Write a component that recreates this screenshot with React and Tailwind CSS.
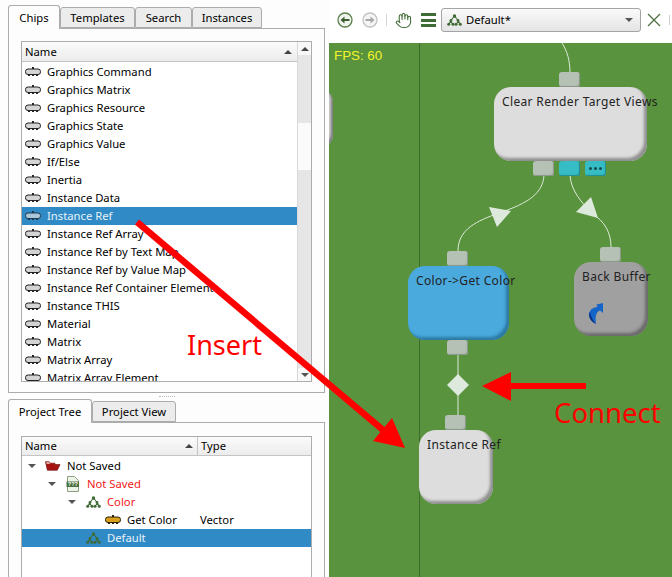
import { Hand } from "lucide-react";

const chips = [
  "Graphics Command",
  "Graphics Matrix",
  "Graphics Resource",
  "Graphics State",
  "Graphics Value",
  "If/Else",
  "Inertia",
  "Instance Data",
  "Instance Ref",
  "Instance Ref Array",
  "Instance Ref by Text Map",
  "Instance Ref by Value Map",
  "Instance Ref Container Element",
  "Instance THIS",
  "Material",
  "Matrix",
  "Matrix Array",
  "Matrix Array Element",
];

function ChipIcon({ fill = "#d4d4d4", stroke = "#222" }) {
  return (
    <svg width="16" height="10" viewBox="0 0 16 10" className="shrink-0">
      <path d="M7 0h2v2H7z" fill={stroke} />
      <rect x="0.5" y="2" width="15" height="5.5" rx="2.5" fill={fill} stroke={stroke} />
      <path d="M3 8.5h2M7 8.5h2M11 8.5h2" stroke={stroke} strokeWidth="1.2" />
    </svg>
  );
}

function GraphIcon({ size = 15, color = "#3f6b35" }) {
  return (
    <svg width={size} height={size * 0.8} viewBox="0 0 15 12" className="shrink-0">
      <path d="M7.5 2 3.5 7 2 10.5M7.5 2l4 5 1.5 3.5M3.5 7 6 10.5M11.5 7 9 10.5" stroke={color} strokeWidth="1.1" fill="none" />
      <circle cx="7.5" cy="2" r="1.7" fill={color} />
      <circle cx="4" cy="6.5" r="1.4" fill={color} />
      <circle cx="11" cy="6.5" r="1.4" fill={color} />
      <circle cx="1.7" cy="10.3" r="1.5" fill={color} />
      <circle cx="6" cy="10.3" r="1.5" fill={color} />
      <circle cx="9" cy="10.3" r="1.5" fill={color} />
      <circle cx="13.3" cy="10.3" r="1.5" fill={color} />
    </svg>
  );
}

function Caret() {
  return <div className="w-0 h-0 border-x-[4px] border-x-transparent border-t-[4px] border-t-[#555] shrink-0" />;
}

function SortUp() {
  return <div className="w-0 h-0 border-x-[4px] border-x-transparent border-b-[4px] border-b-[#444] shrink-0" />;
}

function Tab({ label, active, width }) {
  return (
    <div
      className={
        active
          ? "h-[24px] -mb-px z-10 flex items-center justify-center bg-[#fdfdfd] border border-b-0 border-[#acacac] rounded-t-[3px]"
          : "h-[21px] flex items-center justify-center bg-[#ececec] border border-[#acacac] rounded-t-[3px]"
      }
      style={{ width }}
    >
      {label}
    </div>
  );
}

function ChipRow({ name, selected }) {
  return (
    <div className={`h-[18px] flex items-center gap-[6px] pl-[3px] ${selected ? "bg-[#2f8ac6] text-[#e8f2f9]" : ""}`}>
      <ChipIcon fill={selected ? "#a9c6da" : "#d4d4d4"} stroke={selected ? "#1d3a4d" : "#222"} />
      <span className="whitespace-nowrap">{name}</span>
    </div>
  );
}

function ChipsPanel() {
  return (
    <div className="h-[365px] shrink-0 border border-[#acacac] bg-[#fdfdfd] pt-[12px] px-[12px]">
      <div className="h-[341px] border border-[#acacac] flex bg-white">
        <div className="flex-1 min-w-0 flex flex-col">
          <div className="h-[20px] shrink-0 flex items-center justify-between pl-[3px] pr-[5px] border-b border-[#c4c4c4] bg-gradient-to-b from-[#fbfbfb] to-[#ececec]">
            <span>Name</span>
            <SortUp />
          </div>
          <div className="flex-1 pt-px overflow-hidden">
            {chips.map((c) => (
              <ChipRow key={c} name={c} selected={c === "Instance Ref"} />
            ))}
          </div>
        </div>
        <div className="w-[14px] flex flex-col border-l border-[#d8d8d8] bg-[#e6e6e6]">
          <div className="h-[13px] bg-[#f8f8f8] flex items-center justify-center">
            <SortUp />
          </div>
          <div className="h-[68px]" />
          <div className="h-[47px] bg-[#fbfbfb]" />
          <div className="flex-1" />
          <div className="h-[13px] bg-[#f8f8f8] flex items-center justify-center">
            <Caret />
          </div>
        </div>
      </div>
    </div>
  );
}

function TreeRow({ indent, caret, icon, label, type, red, selected }) {
  return (
    <div className={`h-[18px] flex items-center ${selected ? "bg-[#2f8ac6] text-[#e8f2f9]" : ""}`}>
      <div className="flex items-center flex-none w-[178px]" style={{ paddingLeft: indent }}>
        <div className="w-[17px] flex items-center shrink-0">{caret && <Caret />}</div>
        <div className="w-[16px] flex items-center justify-center shrink-0">{icon}</div>
        <span className={`ml-[6px] whitespace-nowrap ${red ? "text-[#f01818]" : ""}`}>{label}</span>
      </div>
      {type && <span>{type}</span>}
    </div>
  );
}

function ProjectPanel() {
  return (
    <div className="h-[170px] shrink-0 border border-[#acacac] bg-[#fdfdfd] pt-[13px] px-[12px]">
      <div className="h-[150px] border border-[#acacac] bg-white">
        <div className="h-[19px] flex border-b border-[#c4c4c4] bg-gradient-to-b from-[#fbfbfb] to-[#ececec]">
          <div className="w-[176px] flex items-center justify-between pl-[3px] pr-[4px] border-r border-[#c4c4c4]">
            <span>Name</span>
            <SortUp />
          </div>
          <div className="flex items-center pl-[3px]">Type</div>
        </div>
        <div className="pt-px">
          <TreeRow
            indent={6}
            caret
            label="Not Saved"
            icon={
              <svg width="16" height="10" viewBox="0 0 17 10" className="shrink-0">
                <path d="M0.5 0.5h4l1 1.5h5v1.5H16L13 9.5H2.5z" fill="#a81414" stroke="#6d1010" strokeWidth="0.7" />
                <path d="M1.5 1h3l1 1.5h-4z" fill="#f0d8d8" />
              </svg>
            }
          />
          <TreeRow
            indent={26}
            caret
            red
            label="Not Saved"
            icon={
              <svg width="14" height="16" viewBox="0 0 14 16" className="shrink-0">
                <path d="M1.5 0.5h7l4 4v11h-11z" fill="#eef3ea" stroke="#8da080" />
                <rect x="0.5" y="5.5" width="12.5" height="5.5" fill="#48703c" />
                <text x="1.8" y="10.2" fontSize="5.5" fontWeight="700" fill="#fff" fontFamily="Liberation Sans, sans-serif">???</text>
              </svg>
            }
          />
          <TreeRow indent={46} caret red label="Color" icon={<GraphIcon />} />
          <TreeRow
            indent={66}
            label="Get Color"
            type="Vector"
            icon={<ChipIcon fill="#dba01a" stroke="#2a2208" />}
          />
          <TreeRow indent={46} selected label="Default" icon={<GraphIcon />} />
        </div>
      </div>
    </div>
  );
}

function Toolbar() {
  return (
    <div className="h-[43px] shrink-0 bg-white flex items-center pl-[8px] pb-[3px]">
      <svg width="16" height="16" viewBox="0 0 16 16" className="shrink-0">
        <circle cx="8" cy="8" r="7" fill="#f2f5ef" stroke="#5a7f4a" strokeWidth="1.3" />
        <path d="M3.5 8 7.5 4.5V7H12.5V9H7.5V11.5Z" fill="#3c5f32" />
      </svg>
      <svg width="16" height="16" viewBox="0 0 16 16" className="shrink-0 ml-[9px]">
        <circle cx="8" cy="8" r="7" fill="#f5f5f5" stroke="#c2c2c2" strokeWidth="1.3" />
        <path d="M12.5 8 8.5 4.5V7H3.5V9H8.5V11.5Z" fill="#a8a8a8" />
      </svg>
      <div className="w-px h-[12px] bg-[#d4d4d4] ml-[8px]" />
      <Hand size={17} strokeWidth={1.5} color="#3f6b35" className="ml-[8px] shrink-0" />
      <div className="ml-[9px] w-[15px] flex flex-col gap-[2.5px] shrink-0">
        <div className="h-[3px] bg-[#3f6b35]" />
        <div className="h-[3px] bg-[#3f6b35]" />
        <div className="h-[3px] bg-[#3f6b35]" />
      </div>
      <div className="ml-[5px] w-[200px] h-[24px] shrink-0 rounded-[3px] border border-[#a4a4a4] bg-gradient-to-b from-[#fafafa] to-[#e4e4e4] flex items-center pl-[5px] pr-[7px] text-black">
        <GraphIcon size={15} />
        <span className="ml-[4px] flex-1">Default*</span>
        <Caret />
      </div>
      <svg width="14" height="14" viewBox="0 0 14 14" className="ml-[6px] shrink-0">
        <path d="M1 1 13 13M13 1 1 13" stroke="#4d7042" strokeWidth="1.3" />
      </svg>
      <div className="w-px h-[10px] bg-[#cfcfcf] ml-[8px]" />
    </div>
  );
}

function Pin({ cls, teal, dots }) {
  return (
    <div
      className={`absolute w-[21px] h-[15px] rounded-[3px] flex items-center justify-center gap-[2px] ${cls} ${
        teal ? "bg-[#35bcc4] shadow-[inset_-1px_-1px_1px_#1f8b90]" : "bg-[#b4c1b4] shadow-[inset_-1px_-1px_1px_#8a958a]"
      }`}
    >
      {dots && (
        <>
          <div className="w-[3px] h-[3px] rounded-full bg-[#164a4e]" />
          <div className="w-[3px] h-[3px] rounded-full bg-[#164a4e]" />
          <div className="w-[3px] h-[3px] rounded-full bg-[#164a4e]" />
        </>
      )}
    </div>
  );
}

function Node({ cls, label, bg, children }) {
  return (
    <div className={`absolute rounded-[17px] ${bg} ${cls}`}>
      <div className="absolute left-[8px] top-[7px] whitespace-nowrap text-[#222] text-[12px] tracking-[0.35px]">{label}</div>
      {children}
    </div>
  );
}

function Canvas() {
  // coords below are relative to the canvas origin at (329,43)
  return (
    <div className="relative flex-1 bg-[#5a933d] overflow-hidden">
      <div className="absolute left-[90px] top-0 bottom-0 w-px bg-[#3d6b2b]" />
      <div className="absolute left-[5px] top-[5px] text-[#f4f42a] text-[13.33px] font-['Liberation_Sans',sans-serif]">FPS: 60</div>
      <div className="absolute left-[-60px] top-[47px] w-[64px] h-[57px] rounded-[12px] bg-[#c8c8c8] shadow-[inset_-2px_-2px_2px_#7f7f7f]" />

      <svg className="absolute left-0 top-0" width="343" height="534" viewBox="0 0 343 534" fill="none">
        <path d="M233 0C238 8 241 17 241 30" stroke="#dfe9dc" strokeWidth="1" />
        <path d="M215 132C214 150 200 160 170 170C148 178 129 186 129 208" stroke="#dfe9dc" strokeWidth="1" />
        <path d="M241 132C242 148 252 158 262 170C276 178 282 190 282 204" stroke="#dfe9dc" strokeWidth="1" />
        <path d="M129 312V332M129 352V372" stroke="#dfe9dc" strokeWidth="1" />
        <path d="M160 164 182 168 168 184Z" fill="#dde9dc" />
        <path d="M262 154 247 169 269 175Z" fill="#dde9dc" />
        <path d="M129 331 140 342 129 353 118 342Z" fill="#dde9dc" />
      </svg>

      <Pin cls="left-[230px] top-[29px]" />
      <Pin cls="left-[204px] top-[118px]" />
      <Pin cls="left-[230px] top-[118px]" teal />
      <Pin cls="left-[256px] top-[118px]" teal dots />
      <Node
        label="Clear Render Target Views"
        bg="bg-[#dddddd] shadow-[inset_-3px_-3px_3px_#8f8f8f]"
        cls="left-[165px] top-[44px] w-[153px] h-[74px]"
      />

      <Pin cls="left-[118px] top-[208px]" />
      <Pin cls="left-[118px] top-[297px]" />
      <Node
        label="Color->Get Color"
        bg="bg-[#4aaade] shadow-[inset_-3px_-3px_3px_#2c7aa3]"
        cls="left-[79px] top-[223px] w-[101px] h-[74px]"
      />

      <Pin cls="left-[271px] top-[204px]" />
      <Node
        label="Back Buffer"
        bg="bg-[#a0a0a0] shadow-[inset_-3px_-3px_3px_#6b6b6b]"
        cls="left-[245px] top-[219px] w-[74px] h-[74px]"
      >
        <svg width="16" height="22" viewBox="0 0 16 22" className="absolute left-[14px] top-[41px]">
          <path d="M15 0 15 10 12 7.5C8 9 7 14 8 21 2 18 -1 12 2 8 4 5 7 4 9.5 4L8.5 1.5Z" fill="#1565c8" />
          <path d="M2 9C3 14 5 18 8 21 2 18 0 13 2 9Z" fill="#0a2f80" />
        </svg>
      </Node>

      <Pin cls="left-[116px] top-[372px]" />
      <Node
        label="Instance Ref"
        bg="bg-[#dddddd] shadow-[inset_-3px_-3px_3px_#8f8f8f]"
        cls="left-[90px] top-[387px] w-[74px] h-[74px]"
      />
    </div>
  );
}

export default function App() {
  return (
    <div className="relative w-[672px] h-[577px] overflow-hidden flex bg-[#fdfdfd] text-[11.25px] leading-[16px] text-black font-['Noto_Sans','Open_Sans',sans-serif]">
      <div className="w-[329px] shrink-0 flex flex-col pl-[8px] pr-[4px] pt-[5px]">
        <div className="h-[23px] shrink-0 flex items-end">
          <Tab label="Chips" active width={52} />
          <Tab label="Templates" width={75} />
          <Tab label="Search" width={57} />
          <Tab label="Instances" width={70} />
        </div>
        <ChipsPanel />
        <div className="h-[6px] shrink-0 flex items-center justify-center">
          <div className="w-[16px] border-t border-dotted border-[#bbb]" />
        </div>
        <div className="h-[23px] shrink-0 flex items-end">
          <Tab label="Project Tree" active width={84} />
          <Tab label="Project View" width={84} />
        </div>
        <ProjectPanel />
      </div>
      <div className="flex-1 flex flex-col min-w-0">
        <Toolbar />
        <Canvas />
      </div>

      {/* red annotations drawn over the screenshot */}
      <svg className="absolute inset-0 pointer-events-none" width="672" height="577" viewBox="0 0 672 577">
        <path d="M137 222 383 430" stroke="#ff0000" strokeWidth="6.5" />
        <path d="M405 448 373 441 392 418Z" fill="#ff0000" />
        <path d="M586 386H505" stroke="#ff0000" strokeWidth="6" />
        <path d="M482 386 511 372V401Z" fill="#ff0000" />
      </svg>
      <div className="absolute left-[187px] top-[326px] text-[27px] leading-[38px] text-[#ff0000] pointer-events-none">Insert</div>
      <div className="absolute left-[554px] top-[394px] text-[27.5px] leading-[38px] text-[#ff0000] pointer-events-none">Connect</div>
    </div>
  );
}
